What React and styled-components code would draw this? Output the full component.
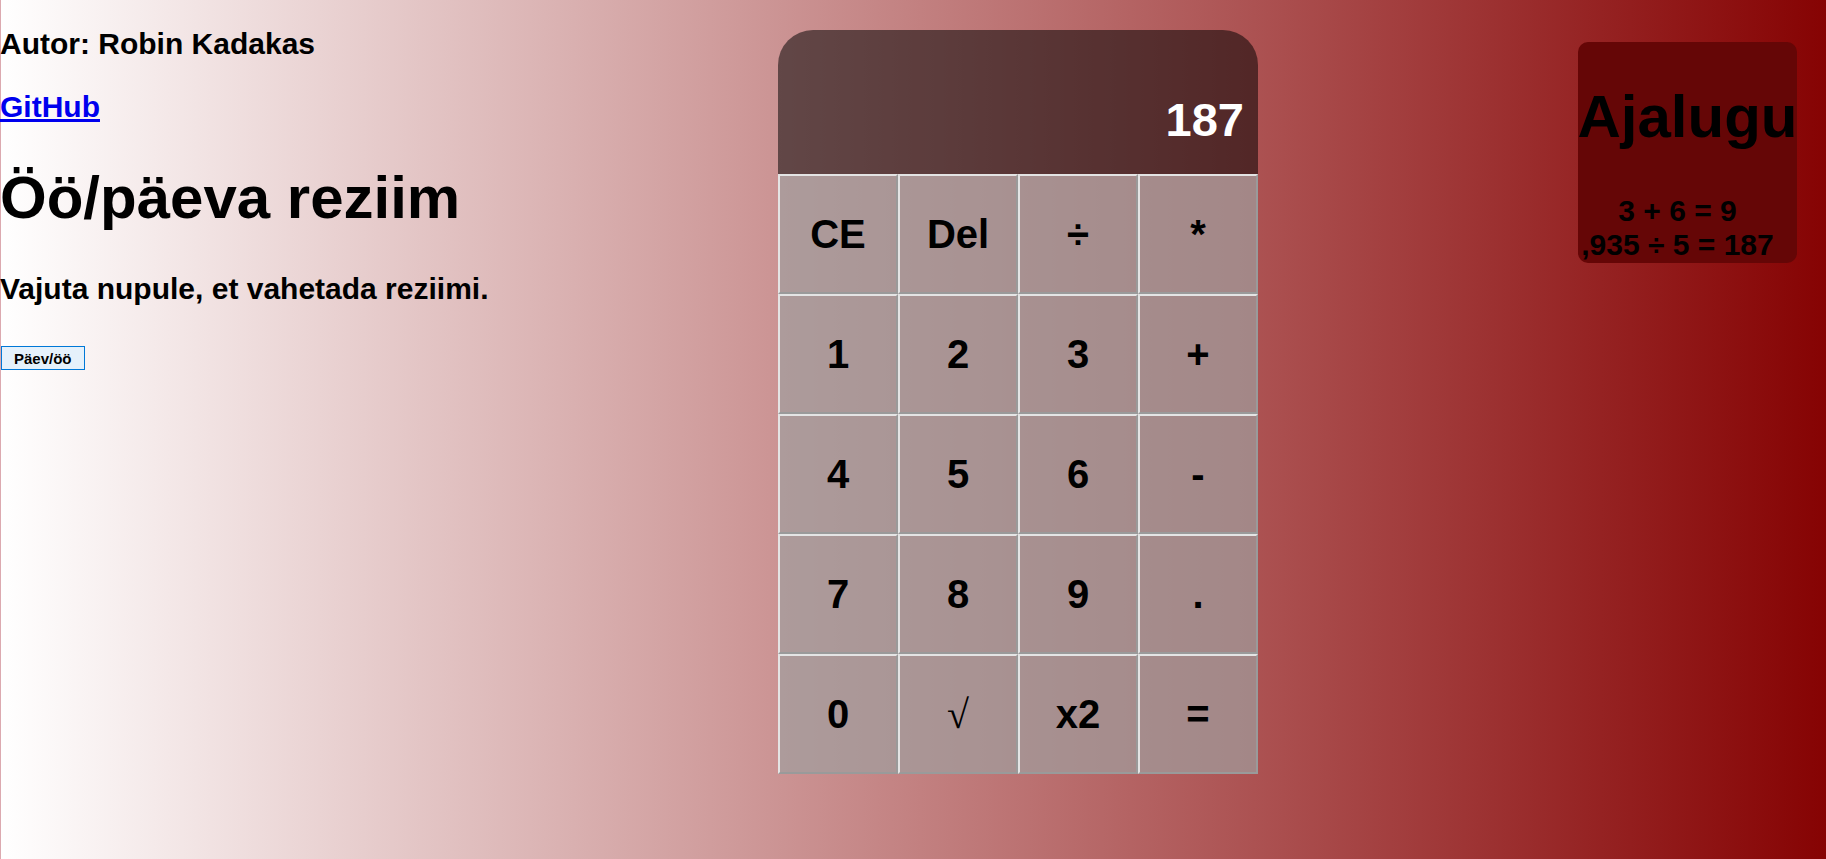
import React from 'react';
import styled, { createGlobalStyle } from 'styled-components';

const GlobalStyle = createGlobalStyle`
  html, body {
    margin: 0;
    padding: 0;
  }
  body {
    font-family: "Liberation Sans", Arial, sans-serif;
  }
`;

const keys = [
  'CE', 'Del', '÷', '*',
  '1', '2', '3', '+',
  '4', '5', '6', '-',
  '7', '8', '9', '.',
  '0', '√', 'x2', '=',
];

const history = ['3 + 6 = 9', ',935 ÷ 5 = 187'];

const App = () => {
  return (
    <>
      <GlobalStyle />
      <Page>
        <Info>
          <Author>Autor: Robin Kadakas</Author>
          <Link href="#">GitHub</Link>
          <Title>Öö/päeva reziim</Title>
          <Hint>Vajuta nupule, et vahetada reziimi.</Hint>
          <ModeButton>Päev/öö</ModeButton>
        </Info>

        <Calculator>
          <Display>187</Display>
          <Keys>
            {keys.map((k) => (
              <Key key={k} serif={k === '√'}>
                {k}
              </Key>
            ))}
          </Keys>
        </Calculator>

        <History>
          <HistoryTitle>Ajalugu</HistoryTitle>
          <HistoryList>
            {history.map((line) => (
              <HistoryLine key={line}>{line}</HistoryLine>
            ))}
          </HistoryList>
        </History>
      </Page>
    </>
  );
};

export default App;

const Page = styled.div`
  min-height: 100vh;
  box-sizing: border-box;
  display: grid;
  grid-template-columns: 777px 480px 1fr;
  align-items: start;
  background: linear-gradient(to right, #ffffff, #860303);
  border-left: 1px solid #dcaab0;
`;

const Info = styled.div`
  display: flex;
  flex-direction: column;
  align-items: flex-start;
  padding-top: 27px;
  margin-left: -1px;
`;

const Author = styled.div`
  font-size: 30px;
  font-weight: 700;
  color: #000;
`;

const Link = styled.a`
  margin-top: 29px;
  font-size: 30px;
  font-weight: 700;
  color: #0000ee;
  text-decoration: underline;
`;

const Title = styled.h1`
  margin: 39px 0 0;
  font-size: 60px;
  font-weight: 700;
  color: #000;
`;

const Hint = styled.div`
  margin-top: 40px;
  font-size: 30px;
  font-weight: 700;
  color: #000;
`;

const ModeButton = styled.button`
  margin-top: 40px;
  margin-left: 1px;
  height: 24px;
  padding: 0 12px;
  font-family: "Liberation Sans", Arial, sans-serif;
  font-size: 15px;
  font-weight: 700;
  color: #000;
  background: #e5f1fb;
  border: 1px solid #0078d7;
`;

const Calculator = styled.div`
  margin-top: 30px;
  width: 480px;
  display: flex;
  flex-direction: column;
`;

const Display = styled.div`
  height: 144px;
  box-sizing: border-box;
  display: flex;
  align-items: flex-end;
  justify-content: flex-end;
  padding: 0 14px 27px 0;
  border-radius: 35px 35px 0 0;
  background: rgba(0, 0, 0, 0.52);
  color: #fff;
  font-size: 47px;
  font-weight: 700;
`;

const Keys = styled.div`
  display: grid;
  grid-template-columns: repeat(4, 120px);
  grid-auto-rows: 120px;
`;

const Key = styled.button`
  box-sizing: border-box;
  width: 120px;
  height: 120px;
  margin: 0;
  padding: 0;
  border-style: solid;
  border-width: 2px;
  border-color: #e4e4e4 #9a9a9a #9a9a9a #e4e4e4;
  background: rgba(160, 158, 158, 0.7);
  color: #000;
  font-family: ${(p) =>
    p.serif ? '"Liberation Serif", "Times New Roman", serif' : '"Liberation Sans", Arial, sans-serif'};
  font-size: 40px;
  font-weight: ${(p) => (p.serif ? 400 : 700)};
`;

const History = styled.div`
  justify-self: end;
  margin: 42px 29px 0 0;
  width: 219px;
  height: 221px;
  box-sizing: border-box;
  display: flex;
  flex-direction: column;
  align-items: center;
  border-radius: 10px;
  background: #650606;
  color: #000;
`;

const HistoryTitle = styled.div`
  margin-top: 40px;
  font-size: 60px;
  font-weight: 700;
  white-space: nowrap;
`;

const HistoryList = styled.div`
  margin-top: 43px;
  display: flex;
  flex-direction: column;
  align-items: center;
  padding-right: 20px;
`;

const HistoryLine = styled.div`
  font-size: 30px;
  font-weight: 700;
  white-space: nowrap;
`;
